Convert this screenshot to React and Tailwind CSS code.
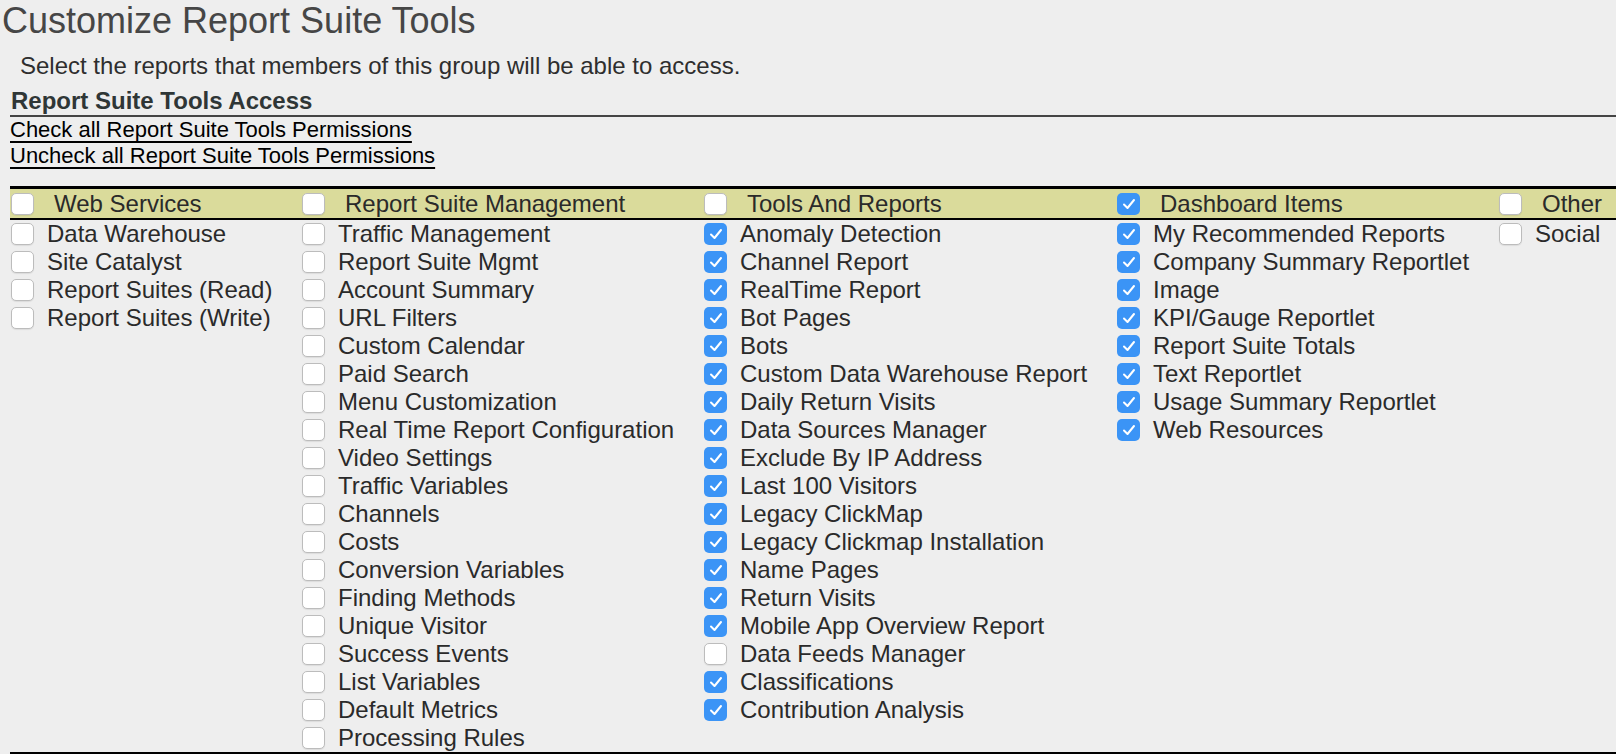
import { useState } from "react";

const COLUMNS = [
  {
    title: "Web Services",
    width: "w-[291px]",
    checked: false,
    items: [
      ["Data Warehouse", false],
      ["Site Catalyst", false],
      ["Report Suites (Read)", false],
      ["Report Suites (Write)", false]
    ]
  },
  {
    title: "Report Suite Management",
    width: "w-[402px]",
    checked: false,
    items: [
      ["Traffic Management", false],
      ["Report Suite Mgmt", false],
      ["Account Summary", false],
      ["URL Filters", false],
      ["Custom Calendar", false],
      ["Paid Search", false],
      ["Menu Customization", false],
      ["Real Time Report Configuration", false],
      ["Video Settings", false],
      ["Traffic Variables", false],
      ["Channels", false],
      ["Costs", false],
      ["Conversion Variables", false],
      ["Finding Methods", false],
      ["Unique Visitor", false],
      ["Success Events", false],
      ["List Variables", false],
      ["Default Metrics", false],
      ["Processing Rules", false]
    ]
  },
  {
    title: "Tools And Reports",
    width: "w-[413px]",
    checked: false,
    items: [
      ["Anomaly Detection", true],
      ["Channel Report", true],
      ["RealTime Report", true],
      ["Bot Pages", true],
      ["Bots", true],
      ["Custom Data Warehouse Report", true],
      ["Daily Return Visits", true],
      ["Data Sources Manager", true],
      ["Exclude By IP Address", true],
      ["Last 100 Visitors", true],
      ["Legacy ClickMap", true],
      ["Legacy Clickmap Installation", true],
      ["Name Pages", true],
      ["Return Visits", true],
      ["Mobile App Overview Report", true],
      ["Data Feeds Manager", false],
      ["Classifications", true],
      ["Contribution Analysis", true]
    ]
  },
  {
    title: "Dashboard Items",
    width: "w-[382px]",
    checked: true,
    items: [
      ["My Recommended Reports", true],
      ["Company Summary Reportlet", true],
      ["Image", true],
      ["KPI/Gauge Reportlet", true],
      ["Report Suite Totals", true],
      ["Text Reportlet", true],
      ["Usage Summary Reportlet", true],
      ["Web Resources", true]
    ]
  },
  {
    title: "Other",
    width: "flex-1",
    checked: false,
    items: [["Social", false]]
  }
];

// mac-style checkbox
function Box({ checked, onClick }) {
  if (checked) {
    return (
      <span
        onClick={onClick}
        className="flex h-[22px] w-[23px] shrink-0 items-center justify-center rounded-[5px] bg-[#3b94f6]"
      >
        <svg width="14" height="12" viewBox="0 0 14 12" fill="none">
          <path d="M2 6.5 L5.5 10 L12 2" stroke="white" strokeWidth="2" strokeLinecap="round" strokeLinejoin="round" />
        </svg>
      </span>
    );
  }
  return (
    <span
      onClick={onClick}
      className="block h-[22px] w-[23px] shrink-0 rounded-[5px] border border-[#bcbcbc] bg-white shadow-[0_1px_1px_rgba(0,0,0,0.08)]"
    />
  );
}

function Row({ label, checked }) {
  const [on, setOn] = useState(checked);
  return (
    <label className="flex h-[28px] items-center pl-px">
      <Box checked={on} onClick={() => setOn(!on)} />
      <span className="ml-[13px] whitespace-nowrap">{label}</span>
    </label>
  );
}

export default function App() {
  return (
    <div className="min-h-screen bg-[#eeeeee] font-['Liberation_Sans',Arial,sans-serif] text-[#2a2a2a]">
      <h1 className="pl-[2px] text-[36px] leading-[41px] text-[#464646]">Customize Report Suite Tools</h1>
      <p className="mt-[11px] pl-[20px] text-[24px] leading-[28px] text-[#2e2e2e]">
        Select the reports that members of this group will be able to access.
      </p>

      <div className="ml-[10px] mt-[6px]">
        <div className="border-b-2 border-[#444] pl-px text-[24px] font-bold leading-[29px] text-[#2f3636]">
          Report Suite Tools Access
        </div>
        <div className="text-[22px] leading-[26px] text-black">
          <div>
            <a href="#" className="underline decoration-2 underline-offset-[4px] [text-decoration-skip-ink:none]">
              Check all Report Suite Tools Permissions
            </a>
          </div>
          <div>
            <a href="#" className="underline decoration-2 underline-offset-[4px] [text-decoration-skip-ink:none]">
              Uncheck all Report Suite Tools Permissions
            </a>
          </div>
        </div>

        {/* Permission table */}
        <div className="mt-[17px] border-b-2 border-black text-[24px]">
          <div className="flex h-[34px] items-center border-t-[3px] border-b-2 border-black bg-[#dadb9b]">
            {COLUMNS.map((c) => (
              <div key={c.title} className={`flex h-full items-center pl-px ${c.width}`}>
                <Box checked={c.checked} />
                <span className="ml-[20px] whitespace-nowrap leading-[28px]">{c.title}</span>
              </div>
            ))}
          </div>
          <div className="flex">
            {COLUMNS.map((c) => (
              <div key={c.title} className={`flex flex-col ${c.width}`}>
                {c.items.map(([label, checked]) => (
                  <Row key={label} label={label} checked={checked} />
                ))}
              </div>
            ))}
          </div>
        </div>
      </div>
    </div>
  );
}
